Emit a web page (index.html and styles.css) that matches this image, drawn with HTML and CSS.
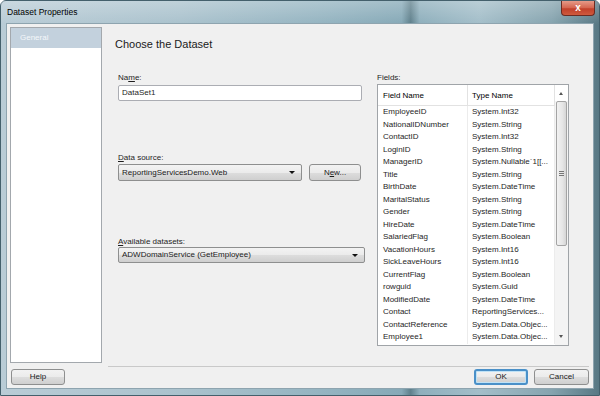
FILE: index.html
```html
<!DOCTYPE html>
<html lang="en">
<head>
    <meta charset="UTF-8">
    <title>Dataset Properties</title>
    <link rel="stylesheet" href="styles.css">
</head>
<body>

<div class="window">
    <div class="titlebar">
        <span class="title">Dataset Properties</span>
        <div class="close">x</div>
    </div>

    <div class="client">
        <div class="top">
            <div class="nav">
                <div class="nav-item selected">General</div>
            </div>

            <div class="main">
                <h1>Choose the Dataset</h1>

                <div class="columns">
                    <div class="form">
                        <div class="label">Na<u>m</u>e:</div>
                        <div class="textbox">DataSet1</div>

                        <div class="label ds-label"><u>D</u>ata source:</div>
                        <div class="combo-row">
                            <div class="combo ds-combo">ReportingServicesDemo.Web<span class="arrow"></span></div>
                            <div class="btn new-btn">N<u>e</u>w...</div>
                        </div>

                        <div class="label av-label"><u>A</u>vailable datasets:</div>
                        <div class="combo av-combo">ADWDomainService (GetEmployee)<span class="arrow"></span></div>
                    </div>

                    <div class="fields">
                        <div class="label">Fields:</div>
                        <div class="grid">
                            <table>
                                <thead>
                                    <tr><th>Field Name</th><th>Type Name</th></tr>
                                </thead>
                                <tbody id="fieldsTable"></tbody>
                            </table>
                            <div class="scrollbar">
                                <div class="sb-up"></div>
                                <div class="sb-thumb"><span class="grip"></span></div>
                                <div class="sb-track"></div>
                                <div class="sb-down"></div>
                            </div>
                        </div>
                    </div>
                </div>
            </div>
        </div>

        <div class="footer">
            <div class="btn help-btn">Help</div>
            <div class="footer-right">
                <div class="btn ok-btn">OK</div>
                <div class="btn cancel-btn">Cancel</div>
            </div>
        </div>
    </div>
</div>

<script>
    let fields = [
        ["EmployeeID", "System.Int32"],
        ["NationalIDNumber", "System.String"],
        ["ContactID", "System.Int32"],
        ["LoginID", "System.String"],
        ["ManagerID", "System.Nullable`1[[..."],
        ["Title", "System.String"],
        ["BirthDate", "System.DateTime"],
        ["MaritalStatus", "System.String"],
        ["Gender", "System.String"],
        ["HireDate", "System.DateTime"],
        ["SalariedFlag", "System.Boolean"],
        ["VacationHours", "System.Int16"],
        ["SickLeaveHours", "System.Int16"],
        ["CurrentFlag", "System.Boolean"],
        ["rowguid", "System.Guid"],
        ["ModifiedDate", "System.DateTime"],
        ["Contact", "ReportingServices..."],
        ["ContactReference", "System.Data.Objec..."],
        ["Employee1", "System.Data.Objec..."]
    ];

    let tableBody = document.getElementById("fieldsTable");
    fields.forEach(f => {
        tableBody.innerHTML += `<tr><td>${f[0]}</td><td>${f[1]}</td></tr>`;
    });
</script>

</body>
</html>
```

FILE: styles.css
```css
body { margin: 0; font-family: "Liberation Sans", Arial, sans-serif; }

.window {
    width: 600px; height: 396px; box-sizing: border-box;
    border: 1px solid #44606c; border-radius: 6px 6px 0 0;
    background: linear-gradient(90deg, #b9ccd6 0%, #aac2cd 30%, #93b3c0 55%, #86a9b7 67%, #5f808c 68.5%, #8eafbc 70%, #a3bec9 80%, #86a4af 92%, #587884 100%);
    display: flex; flex-direction: column;
}

.titlebar {
    height: 23px; display: flex; justify-content: space-between; align-items: flex-start;
    background: linear-gradient(180deg, rgba(255,255,255,0.25), rgba(255,255,255,0));
}
.title { font-size: 8.5px; color: #000; padding: 6px 0 0 6px; }
.close {
    width: 34px; height: 15px; margin-right: 4px; box-sizing: border-box;
    border: 1px solid #6b2b22; border-top: none; border-radius: 0 0 4px 4px;
    background: linear-gradient(180deg, #e59a88 0%, #d4644e 50%, #c1402a 55%, #cf5a3e 100%);
    color: #fff; font-size: 10px; font-weight: bold; text-align: center; line-height: 13px;
}

.client {
    margin: 0 6px 7px 6px; flex: 1;
    background: #f0f0f0; box-shadow: 0 0 0 1px #8ea4af;
    padding: 3px 4px 0 3px;
    font-size: 8px; color: #1e1e1e;
}

.top { display: flex; align-items: flex-start; }

.nav {
    width: 92px; height: 336px; box-sizing: border-box;
    background: #fff; border: 1px solid #a3a8ad;
}
.nav-item { height: 20px; line-height: 20px; padding-left: 9px; color: #f4f7fa; }
.nav-item.selected { background: #c3d1dd; }

.main {
    margin-left: 6px; flex: 1; height: 339px;
    border-bottom: 1px solid #c9c9c9;
}

h1 { font-size: 11px; font-weight: normal; line-height: 15px; margin: 10px 0 0 7px; color: #1a1a1a; }

.columns { display: flex; gap: 11px; margin: 20px 0 0 10px; }

.label { line-height: 11px; height: 11px; }
.form { width: 248px; }
.form .label { margin-bottom: 2px; }
.ds-label { margin-top: 51px; }
.form .ds-label { margin-bottom: 1px; }
.av-label { margin-top: 55px; }
.form .av-label { margin-bottom: 0; }

.textbox {
    width: 244px; height: 16px; box-sizing: border-box;
    border: 1px solid #abadb3; border-radius: 2px; background: #fff;
    padding-left: 3px; line-height: 14px;
}

.combo-row { display: flex; gap: 7px; }

.combo {
    position: relative; height: 17px; box-sizing: border-box;
    border: 1px solid #8e8f8f; border-radius: 2px;
    background: linear-gradient(180deg, #f3f3f3 0%, #ebebeb 50%, #dddddd 51%, #cfcfcf 100%);
    padding-left: 3px; line-height: 15px; color: #1a1a1a;
}
.ds-combo { width: 184px; }
.av-combo { width: 247px; height: 16px; line-height: 14px; }
.arrow {
    position: absolute; right: 6px; top: 6px;
    border-left: 3px solid transparent; border-right: 3px solid transparent; border-top: 3px solid #111;
}

.btn {
    height: 17px; box-sizing: border-box; text-align: center;
    border: 1px solid #8e8f8f; border-radius: 3px;
    background: linear-gradient(180deg, #f2f2f2 0%, #ebebeb 50%, #dddddd 51%, #cfcfcf 100%);
    line-height: 15px; color: #1a1a1a;
}
.new-btn { width: 52px; }

.fields { width: 192px; }
.fields .label { margin-bottom: 1px; }

.grid {
    height: 262px; box-sizing: border-box;
    border: 1px solid #a0a4a8; background: #fff;
    display: flex; overflow: hidden;
}
table { width: 177px; border-collapse: collapse; table-layout: fixed; align-self: flex-start; }
th, td { text-align: left; white-space: nowrap; overflow: hidden; padding: 0; }
th { height: 20px; font-weight: normal; color: #000; border-bottom: 1px solid #e2e2e2; border-right: 1px solid #e2e2e2; }
td { height: 12.5px; line-height: 12px; border-right: 1px solid #ececec; color: #262626; }
th:first-child, td:first-child { width: 84px; padding-left: 5px; }
th:last-child, td:last-child { padding-left: 4px; }

.scrollbar { width: 13px; display: flex; flex-direction: column; background: #f4f4f4; }
.sb-up, .sb-down { height: 16px; position: relative; }
.sb-up::after, .sb-down::after {
    content: ""; position: absolute; left: 4px;
    border-left: 2.5px solid transparent; border-right: 2.5px solid transparent;
}
.sb-up::after { top: 7px; border-bottom: 3px solid #555; }
.sb-down::after { top: 6px; border-top: 3px solid #555; }
.sb-up { background: #fff; }
.sb-thumb {
    height: 145px; margin: 0 1px; box-sizing: border-box;
    border: 1px solid #a4a4a4; border-radius: 2px;
    background: linear-gradient(90deg, #f2f2f2 0%, #e6e6e6 60%, #d6d6d6 100%);
    display: flex; align-items: center; justify-content: center;
}
.grip { width: 5px; height: 5px; border-top: 1px solid #777; border-bottom: 1px solid #777; box-sizing: border-box; position: relative; }
.grip::after { content: ""; position: absolute; left: 0; right: 0; top: 1px; border-top: 1px solid #777; }
.sb-track { flex: 1; }

.footer { display: flex; justify-content: space-between; margin-top: 2px; padding-left: 1px; }
.footer-right { display: flex; gap: 6px; }
.help-btn { width: 54px; height: 16px; line-height: 14px; }
.ok-btn { width: 54px; height: 16px; line-height: 12px; border: 2px solid #4a90c8; box-shadow: inset 0 0 0 1px #bfe2f6; }
.cancel-btn { width: 55px; height: 16px; line-height: 14px; }
```
